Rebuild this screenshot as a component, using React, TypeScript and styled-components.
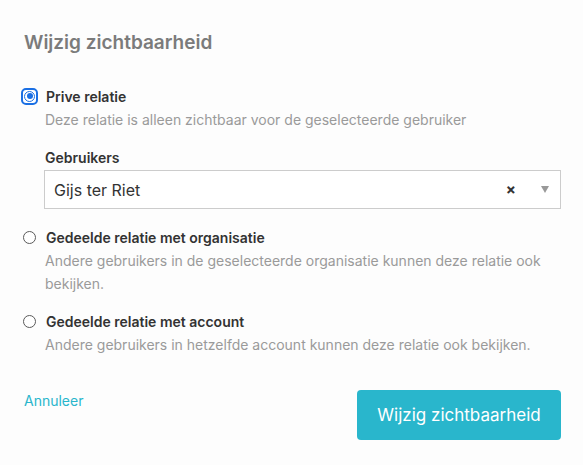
import styled, { createGlobalStyle } from "styled-components";

const GlobalStyle = createGlobalStyle`
  html, body {
    margin: 0;
    padding: 0;
    background: #fdfdfd;
    font-family: "Inter", "Noto Sans", sans-serif;
  }
`;

const Modal = styled.div`
  width: 583px;
  height: 465px;
  box-sizing: border-box;
  padding: 31px 22px 0 24px;
  display: flex;
  flex-direction: column;
`;

const Title = styled.h2`
  margin: 0;
  font-size: 19px;
  line-height: 24px;
  font-weight: 600;
  color: #7b7b7b;
`;

const Option = styled.div<{ $top: number }>`
  margin-top: ${(p) => p.$top}px;
  display: flex;
  flex-direction: column;
`;

const OptionRow = styled.label`
  display: flex;
  align-items: center;
  height: 20px;
  gap: 8px;
  margin-left: -3px;
`;

const RadioSlot = styled.span`
  width: 17px;
  height: 17px;
  display: flex;
  align-items: center;
  justify-content: center;
  flex-shrink: 0;
`;

const Radio = styled.span`
  box-sizing: border-box;
  width: 13px;
  height: 13px;
  border-radius: 50%;
  border: 1px solid #5a5a5a;
  background: #fff;
`;

const FocusRing = styled.span`
  box-sizing: border-box;
  width: 17px;
  height: 17px;
  border-radius: 5px;
  border: 2px solid #1a6fe4;
  display: flex;
  align-items: center;
  justify-content: center;
  background: #fff;
`;

const CheckedRadio = styled.span`
  box-sizing: border-box;
  width: 11px;
  height: 11px;
  border-radius: 50%;
  border: 1.5px solid #1a6fe4;
  display: flex;
  align-items: center;
  justify-content: center;

  &::after {
    content: "";
    width: 6px;
    height: 6px;
    border-radius: 50%;
    background: #1a6fe4;
  }
`;

const OptionLabel = styled.span`
  font-size: 14px;
  font-weight: 600;
  color: #333;
`;

const Description = styled.p`
  margin: 2px 0 0 21px;
  font-size: 14px;
  line-height: 23px;
  color: #9a9a9a;
  max-width: 500px;
`;

const Field = styled.div`
  margin: 17px 0 0 20px;
  display: flex;
  flex-direction: column;
  gap: 2px;
`;

const FieldLabel = styled.span`
  margin-left: 1px;
  font-size: 14px;
  line-height: 20px;
  font-weight: 600;
  color: #333;
`;

const Select = styled.div`
  box-sizing: border-box;
  height: 39px;
  border: 1px solid #cccccc;
  background: #fff;
  display: flex;
  align-items: center;
  padding: 0 11px 0 9px;
`;

const SelectValue = styled.span`
  flex: 1;
  font-size: 16px;
  color: #333;
`;

const Clear = styled.span`
  font-size: 15px;
  font-weight: 700;
  color: #333;
  margin-right: 25px;
`;

const Arrow = styled.span`
  width: 0;
  height: 0;
  border-left: 4px solid transparent;
  border-right: 4px solid transparent;
  border-top: 7px solid #999;
`;

const Footer = styled.div`
  margin-top: 34px;
  display: flex;
  justify-content: space-between;
  align-items: flex-start;
`;

const CancelLink = styled.a`
  margin-top: 1px;
  font-size: 14px;
  line-height: 20px;
  color: #29b6cc;
  text-decoration: none;
  cursor: pointer;
`;

const PrimaryButton = styled.button`
  width: 204px;
  height: 50px;
  border: none;
  border-radius: 4px;
  background: #29b6cc;
  color: #fff;
  font-family: inherit;
  font-size: 17px;
  cursor: pointer;
`;

export default function App() {
  return (
    <>
      <GlobalStyle />
      <Modal>
        <Title>Wijzig zichtbaarheid</Title>

        <Option $top={31}>
          <OptionRow>
            <RadioSlot>
              <FocusRing>
                <CheckedRadio />
              </FocusRing>
            </RadioSlot>
            <OptionLabel>Prive relatie</OptionLabel>
          </OptionRow>
          <Description>Deze relatie is alleen zichtbaar voor de geselecteerde gebruiker</Description>
          <Field>
            <FieldLabel>Gebruikers</FieldLabel>
            <Select>
              <SelectValue>Gijs ter Riet</SelectValue>
              <Clear>×</Clear>
              <Arrow />
            </Select>
          </Field>
        </Option>

        <Option $top={18}>
          <OptionRow>
            <RadioSlot>
              <Radio />
            </RadioSlot>
            <OptionLabel>Gedeelde relatie met organisatie</OptionLabel>
          </OptionRow>
          <Description>
            Andere gebruikers in de geselecteerde organisatie kunnen deze relatie ook bekijken.
          </Description>
        </Option>

        <Option $top={16}>
          <OptionRow>
            <RadioSlot>
              <Radio />
            </RadioSlot>
            <OptionLabel>Gedeelde relatie met account</OptionLabel>
          </OptionRow>
          <Description>
            Andere gebruikers in hetzelfde account kunnen deze relatie ook bekijken.
          </Description>
        </Option>

        <Footer>
          <CancelLink>Annuleer</CancelLink>
          <PrimaryButton>Wijzig zichtbaarheid</PrimaryButton>
        </Footer>
      </Modal>
    </>
  );
}
